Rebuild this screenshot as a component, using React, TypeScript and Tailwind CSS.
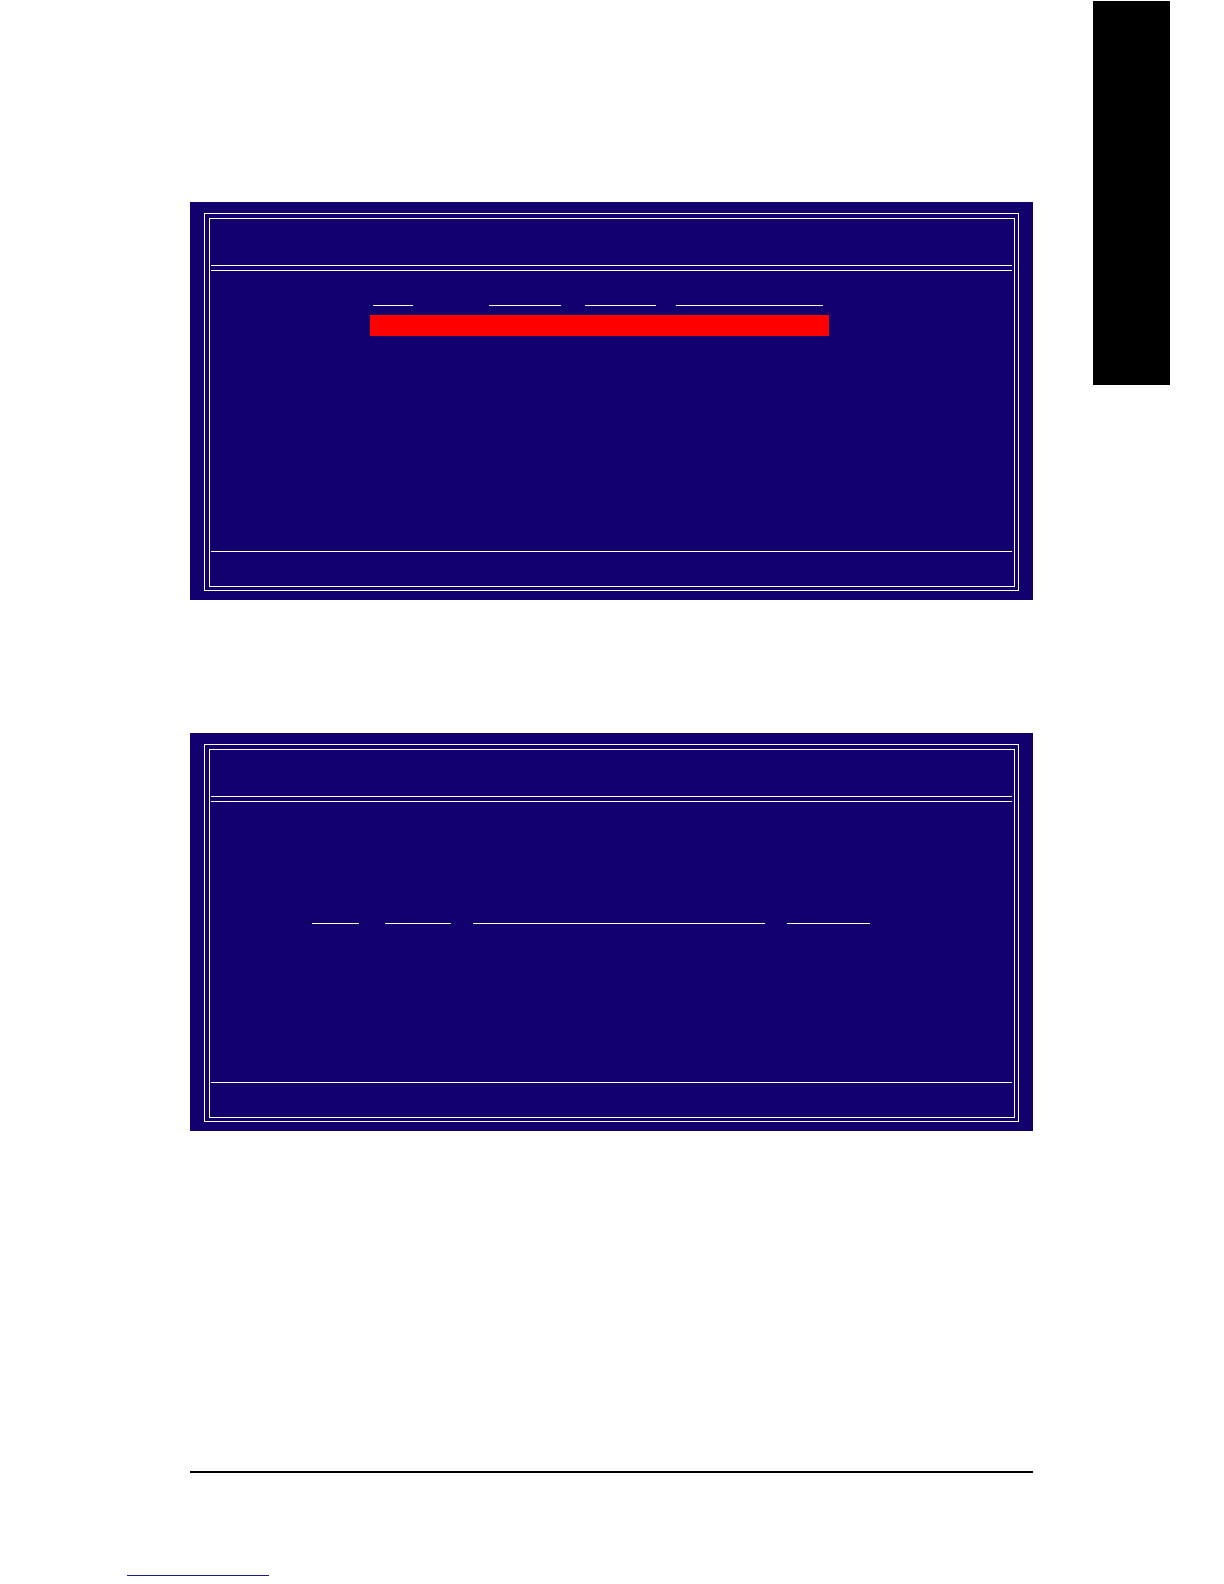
import type { ReactNode } from "react";

function Screen({ children }: { children: ReactNode }) {
  return (
    <section className="bg-[#11006e] px-[14px] pt-[11px] pb-[9px]">
      {/* Double frame */}
      <div className="border border-white pt-1 pr-[3px] pb-[3px] pl-1">
        <div className="border border-white pr-[2px] pl-px">
          <header className="h-[46px]" />
          <div className="h-[6px] border-y border-white" />
          <div className="min-h-[280px]">{children}</div>
          <footer className="h-[35px] border-t border-white" />
        </div>
      </div>
    </section>
  );
}

function DiskScreen() {
  return (
    <Screen>
      <div className="ml-[159px] w-[459px] max-w-full pt-[34px]">
        {/* Column rules */}
        <div className="flex pl-[3px]">
          <div className="mr-[76px] h-px w-[40px] bg-white" />
          <div className="mr-[24px] h-px w-[72px] bg-white" />
          <div className="mr-[20px] h-px w-[71px] bg-white" />
          <div className="h-px w-[147px] bg-white" />
        </div>
        {/* Selected row */}
        <div className="mt-[9px] h-[21px] bg-[#ff0000]" />
      </div>
    </Screen>
  );
}

function VolumeScreen() {
  return (
    <Screen>
      <div className="ml-[101px] flex pt-[121px]">
        <div className="mr-[26px] h-px w-[47px] bg-white" />
        <div className="mr-[22px] h-px w-[66px] bg-white" />
        <div className="mr-[22px] h-px w-[292px] bg-white" />
        <div className="h-px w-[83px] bg-white" />
      </div>
    </Screen>
  );
}

export default function App() {
  return (
    <div className="min-h-screen bg-white pb-2 font-['Liberation_Sans',sans-serif]">
      <div className="flex items-start gap-[60px] pr-[54px] pl-[190px]">
        <main className="min-w-0 flex-1 pt-[202px]">
          <DiskScreen />
          <div className="mt-[133px]">
            <VolumeScreen />
          </div>
          <hr className="mt-[340px] border-t-2 border-black" />
        </main>

        {/* Chapter tab */}
        <aside className="mt-px h-96 w-[77px] shrink-0 bg-black" />
      </div>

      <footer className="pt-[102px] pl-[127px]">
        <a href="#" aria-label="Website" className="block h-px w-[142px] bg-[#1a1a96]" />
      </footer>
    </div>
  );
}
